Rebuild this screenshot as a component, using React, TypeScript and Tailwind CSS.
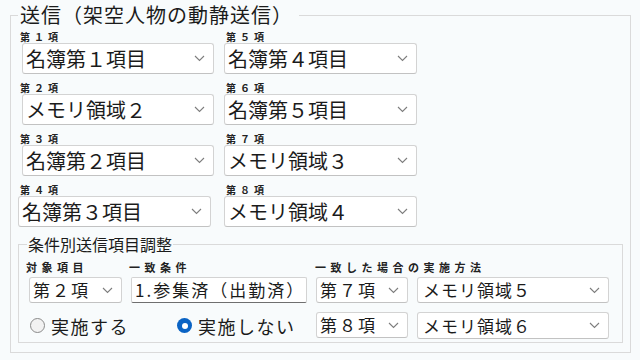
import React from "react";

// Thin chevron used by every combo box
const Chevron = () => (
  <svg width="11" height="7" viewBox="0 0 11 7" className="shrink-0">
    <path d="M1 1l4.5 4.5L10 1" fill="none" stroke="#7d7d7d" strokeWidth="1.1" />
  </svg>
);

type ComboProps = {
  value: string;
  className?: string;
  textClass?: string;
};

function Combo({ value, className = "", textClass = "" }: ComboProps) {
  return (
    <div
      className={`flex items-center justify-between bg-white border border-[#d3d3d3] border-b-[#c2c2c2] rounded-[3px] pr-[8px] ${className}`}
    >
      <span className={`whitespace-nowrap text-[#1b1b1b] ${textClass}`}>{value}</span>
      <Chevron />
    </div>
  );
}

function Slot({ label, value, shift = false }: { label: string; value: string; shift?: boolean }) {
  return (
    <div className="flex flex-col">
      <div className="h-[13px] leading-[13px] pl-[2px] text-[10px] font-bold tracking-[4px] text-[#222]">
        {label}
      </div>
      <Combo
        value={value}
        className={`h-[31px] ${shift ? "w-[193px]" : "ml-[4px] w-[192px]"}`}
        textClass="pl-[3px] text-[20px] leading-[28px]"
      />
    </div>
  );
}

function Radio({ checked, label }: { checked: boolean; label: string }) {
  return (
    <div className="flex items-center gap-[6px]">
      {checked ? (
        <span className="flex h-[15px] w-[15px] items-center justify-center rounded-full bg-[#0a63c4]">
          <span className="h-[6px] w-[6px] rounded-full bg-white" />
        </span>
      ) : (
        <span className="h-[15px] w-[15px] rounded-full border border-[#8a8a8a] bg-[#f2f2f2]" />
      )}
      <span className="text-[18px] leading-[24px] tracking-[1.5px] text-[#1b1b1b]">{label}</span>
    </div>
  );
}

export default function App() {
  const left = [
    { label: "第１項", value: "名簿第１項目" },
    { label: "第２項", value: "メモリ領域２" },
    { label: "第３項", value: "名簿第２項目" },
    { label: "第４項", value: "名簿第３項目", shift: true },
  ];
  const right = [
    { label: "第５項", value: "名簿第４項目" },
    { label: "第６項", value: "名簿第５項目" },
    { label: "第７項", value: "メモリ領域３" },
    { label: "第８項", value: "メモリ領域４" },
  ];

  return (
    <div className="h-[360px] w-[640px] overflow-hidden bg-[#f8fbfc] font-['Noto_Sans_CJK_JP','Noto_Sans',sans-serif]">
      <fieldset className="ml-[10px] h-[353px] w-[620px] border border-[#dadada] px-[7px]">
        <legend className="px-[2px] pr-[6px] text-[20px] leading-[30px] tracking-[1px] text-[#1b1b1b]">
          送信（架空人物の動静送信）
        </legend>

        {/* Eight send slots in two columns */}
        <div className="flex gap-[10px]">
          <div className="flex w-[196px] flex-col gap-[7px]">
            {left.map((s) => (
              <Slot key={s.label} label={s.label} value={s.value} shift={s.shift} />
            ))}
          </div>
          <div className="flex w-[193px] flex-col gap-[7px]">
            {right.map((s) => (
              <Slot key={s.label} label={s.label} value={s.value} shift />
            ))}
          </div>
        </div>

        {/* Conditional adjustment group */}
        <fieldset className="mt-[8px] h-[108px] w-[605px] border border-[#dadada] px-0">
          <legend className="ml-[8px] px-[1px] text-[16px] leading-[18px] text-[#1b1b1b]">
            条件別送信項目調整
          </legend>

          <div className="ml-[10px] mt-[8px] grid grid-cols-[93px_176px_92px_192px] gap-x-[9px]">
            <div className="-ml-[3px] h-[13px] text-[11px] font-bold leading-[13px] tracking-[4.5px] text-[#222]">
              対象項目
            </div>
            <div className="-ml-[2px] h-[13px] text-[11px] font-bold leading-[13px] tracking-[4.5px] text-[#222]">
              一致条件
            </div>
            <div className="col-span-2 -ml-[1px] h-[13px] text-[11px] font-bold leading-[13px] tracking-[4.5px] text-[#222]">
              一致した場合の実施方法
            </div>

            <Combo
              value="第２項"
              className="mt-[3px] h-[26px]"
              textClass="pl-[3px] text-[17px] leading-[24px] tracking-[2px]"
            />
            <div className="mt-[3px] flex h-[26px] items-center rounded-[2px] border border-[#d3d3d3] border-b-[#6f6f6f] bg-white pl-[3px]">
              <span className="whitespace-nowrap text-[17px] leading-[24px] tracking-[2px] text-[#1b1b1b]">
                1.参集済（出勤済）
              </span>
            </div>
            <Combo
              value="第７項"
              className="mt-[3px] h-[26px]"
              textClass="pl-[3px] text-[17px] leading-[24px] tracking-[2px]"
            />
            <Combo
              value="メモリ領域５"
              className="mt-[3px] h-[26px]"
              textClass="pl-[5px] text-[17px] leading-[24px] tracking-[1px]"
            />

            <div className="col-span-2 mt-[9px] flex items-center gap-[48px] pl-[1px]">
              <Radio checked={false} label="実施する" />
              <Radio checked label="実施しない" />
            </div>
            <Combo
              value="第８項"
              className="mt-[9px] h-[26px]"
              textClass="pl-[3px] text-[17px] leading-[24px] tracking-[2px]"
            />
            <Combo
              value="メモリ領域６"
              className="mt-[9px] h-[27px]"
              textClass="pl-[5px] text-[17px] leading-[24px] tracking-[1px]"
            />
          </div>
        </fieldset>
      </fieldset>
    </div>
  );
}
